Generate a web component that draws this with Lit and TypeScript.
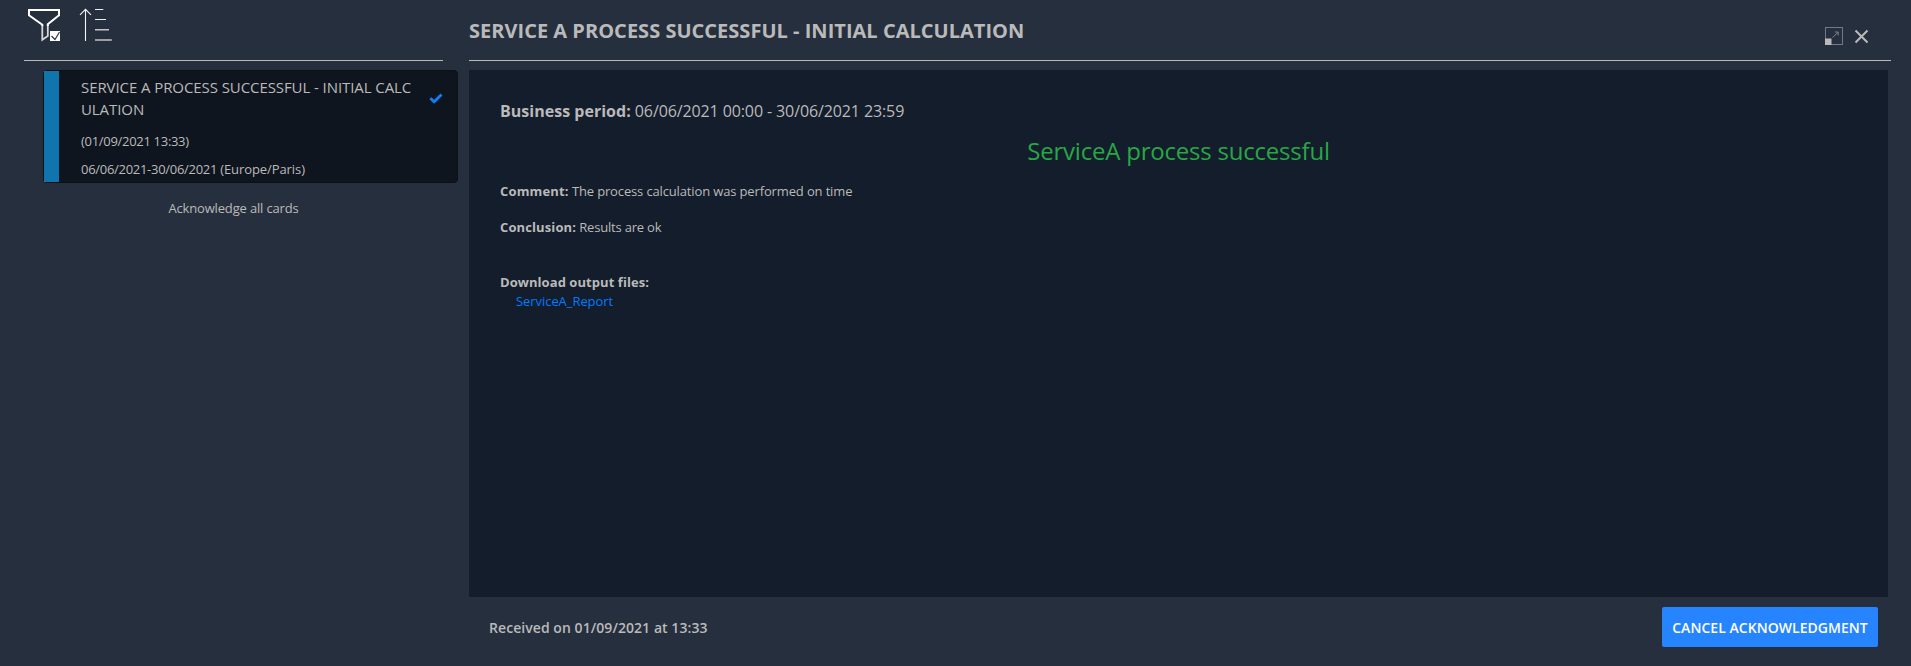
import { LitElement, html, css } from "lit";
import { customElement, property } from "lit/decorators.js";

@customElement("feed-toolbar")
class FeedToolbar extends LitElement {
  static styles = css`
    :host { display: flex; height: 60px; margin: 0 15px 0 24px; border-bottom: 1px solid #bababa; }
    svg { display: block; }
    .filter { margin: 8px 0 0 3px; }
    .sort { margin: 8px 0 0 18px; }
  `;
  render() {
    return html`
      <svg class="filter" width="34" height="34" viewBox="0 0 34 34">
        <path d="M15.300 17V31.700L20.800 28V17" fill="none" stroke="#d6d7da" stroke-width="1.800"/>
        <path d="M15.300 18V16.800L2 7.300V2H32V7.300L20.800 16.300V18" fill="none" stroke="#fff" stroke-width="2"/>
        <rect x="23" y="23" width="10" height="10" fill="#fff"/>
        <path d="M24.500 28L28 31.500L32.500 24" fill="none" stroke="#26303e" stroke-width="1.100"/>
      </svg>
      <svg class="sort" width="34" height="34" viewBox="0 0 34 34">
        <path d="M6.500 33V1.500M1 6.800L6.500 1.300L12 6.800" fill="none" stroke="#f4f4f4" stroke-width="1.100"/>
        <path d="M16 1.500H24.300M16 11.500H27" stroke="#eee" stroke-width="1.100"/>
        <path d="M16 21.700H30M16 32H32.800" stroke="#c5c3c8" stroke-width="1.400"/>
      </svg>`;
  }
}

@customElement("feed-card")
class FeedCard extends LitElement {
  @property() heading = "";
  @property() date = "";
  @property() period = "";
  @property() zone = "";
  static styles = css`
    :host { display: flex; box-sizing: border-box; height: 113px; margin: 9px 0 0 43px; border: 1px solid #0c1118; border-radius: 4px; background: #0f151e; }
    .severity { width: 15px; background: #1074ad; }
    .body { width: 332px; padding: 5px 0 0 22px; font-size: 13px; line-height: 20px; white-space: nowrap; }
    .heading { font-size: 15px; line-height: 22px; letter-spacing: -0.08px; white-space: normal; word-break: break-all; }
    .date { margin-top: 11px; letter-spacing: -0.3px; }
    .period { margin-top: 8px; letter-spacing: -0.29px; }
    .zone { letter-spacing: -0.08px; }
    .check { margin: 22px 0 0 16px; }
  `;
  render() {
    return html`
      <div class="severity"></div>
      <div class="body">
        <div class="heading">${this.heading}</div>
        <div class="date">${this.date}</div>
        <div class="period">${this.period} <span class="zone">${this.zone}</span></div>
      </div>
      <svg class="check" width="14" height="11" viewBox="0 0 14 11">
        <path d="M1.300 5.200L5.200 8.800L12.500 1.500" fill="none" stroke="#0a82ff" stroke-width="2.700"/>
      </svg>`;
  }
}

@customElement("card-detail")
class CardDetail extends LitElement {
  static styles = css`
    :host { display: flex; flex-direction: column; width: 1422px; height: 666px; }
    .header { display: flex; height: 60px; border-bottom: 1px solid #bababa; }
    .title { flex: 1; margin: 0; padding-top: 16px; font-size: 20px; line-height: 30px; font-weight: 700; letter-spacing: 0.02px; white-space: nowrap; }
    .expand { margin: 27px 11px 0 0; }
    .close { margin: 29px 22px 0 0; }
    .content { box-sizing: border-box; width: 1419px; height: 527px; margin-top: 9px; padding: 29px 31px; background: #141d2b; font-size: 13px; line-height: 20px; letter-spacing: -0.14px; }
    .content b { letter-spacing: 0.15px; }
    .business { font-size: 16px; line-height: 24px; letter-spacing: -0.11px; }
    .content .business b { letter-spacing: 0.02px; }
    .result { margin: 10px 0 12px; color: #28a745; font-size: 24px; line-height: 36px; letter-spacing: -0.21px; text-align: center; }
    .conclusion { margin-top: 16px; letter-spacing: -0.19px; }
    .content .conclusion b { letter-spacing: 0.11px; }
    .download { margin-top: 36px; line-height: 19px; }
    .content .download b { letter-spacing: 0.06px; }
    a { display: inline-block; margin-left: 16px; color: #007bff; letter-spacing: -0.06px; text-decoration: none; }
    .footer { display: flex; justify-content: space-between; align-items: center; width: 1389px; height: 40px; margin: 10px 0 0 20px; font-size: 14px; font-weight: 600; letter-spacing: 0.06px; }
    button { width: 216px; height: 40px; padding: 0; border: 0; border-radius: 2px; background: #2684ff; color: #fff; font: inherit; letter-spacing: 0.04px; white-space: nowrap; }
  `;
  render() {
    return html`
      <div class="header">
        <h1 class="title">SERVICE A PROCESS SUCCESSFUL - INITIAL CALCULATION</h1>
        <svg class="expand" width="18" height="18" viewBox="0 0 18 18">
          <rect x=".5" y=".5" width="17" height="17" fill="none" stroke="#727a84"/>
          <rect x="0" y="11.500" width="6.500" height="6.500" fill="#bababa"/>
          <path d="M7.500 10.500L13 5.300M9.800 5H13.200V8.500" fill="none" stroke="#868b91" stroke-width=".9"/>
        </svg>
        <svg class="close" width="15" height="15" viewBox="0 0 15 15">
          <path d="M1.500 1.500L13.500 13.500M13.500 1.500L1.500 13.500" stroke="#bababa" stroke-width="2"/>
        </svg>
      </div>
      <div class="content">
        <div class="business"><b>Business period:</b> 06/06/2021 00:00 - 30/06/2021 23:59</div>
        <div class="result">ServiceA process successful</div>
        <div><b>Comment:</b> The process calculation was performed on time</div>
        <div class="conclusion"><b>Conclusion:</b> Results are ok</div>
        <div class="download"><b>Download output files:</b><br /><a>ServiceA_Report</a></div>
      </div>
      <div class="footer">
        <span>Received on 01/09/2021 at 13:33</span>
        <button>CANCEL ACKNOWLEDGMENT</button>
      </div>`;
  }
}

@customElement("app-root")
class AppRoot extends LitElement {
  static styles = css`
    :host { display: flex; height: 666px; overflow: hidden; background: #262f3e; color: #bababa; font-family: "Open Sans", "Noto Sans", sans-serif; }
    .feed { width: 458px; margin-right: 11px; }
    .ack { margin: 15px 15px 0 24px; font-size: 13px; line-height: 20px; letter-spacing: -0.16px; text-align: center; }
  `;
  render() {
    return html`
      <div class="feed">
        <feed-toolbar></feed-toolbar>
        <feed-card heading="SERVICE A PROCESS SUCCESSFUL - INITIAL CALCULATION" date="(01/09/2021 13:33)" period="06/06/2021-30/06/2021" zone="(Europe/Paris)"></feed-card>
        <div class="ack">Acknowledge all cards</div>
      </div>
      <card-detail></card-detail>`;
  }
}
